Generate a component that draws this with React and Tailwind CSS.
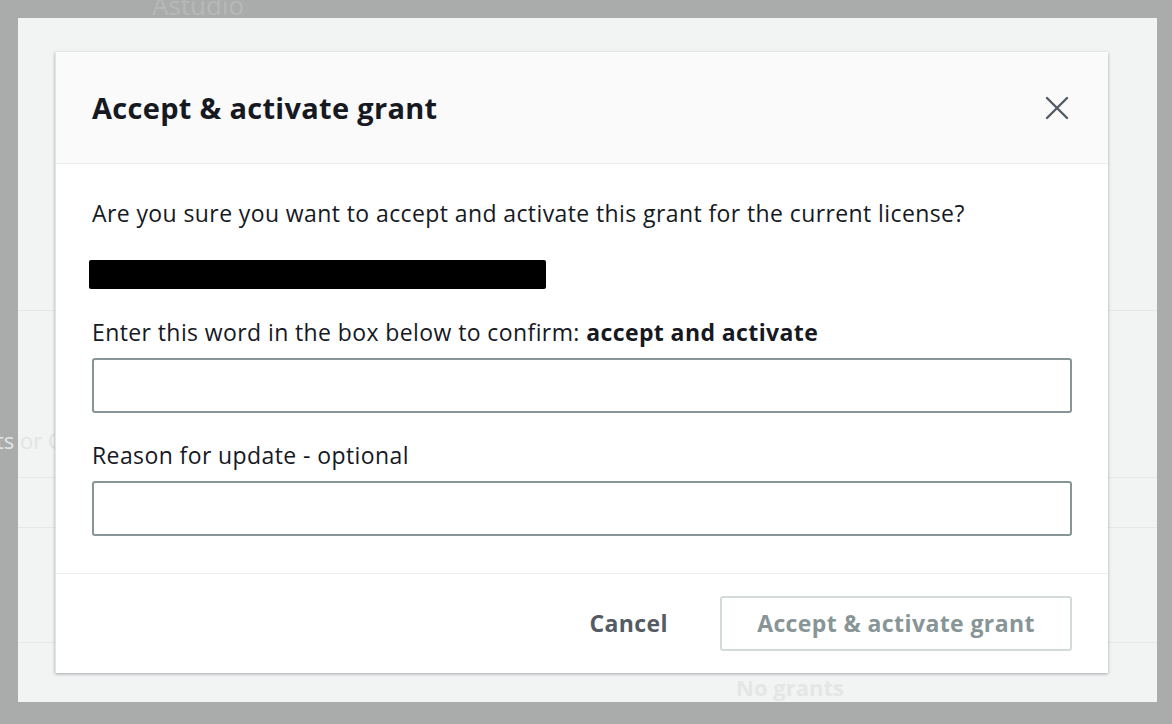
const font = { fontFamily: '"Open Sans", "Noto Sans", sans-serif' };

const CloseIcon = () => (
    <svg width="24" height="24" viewBox="0 0 24 24" fill="none" stroke="#545b64" strokeWidth="2.4" strokeLinecap="round">
        <path d="M2 2 L22 22 M22 2 L2 22" />
    </svg>
);

const TextField = () => (
    <input
        type="text"
        className="block w-full h-[55px] rounded-[3px] border-2 border-[#879596] bg-white px-3 text-[22px] outline-none"
    />
);

export default function App() {
    return (
        <div className="relative w-[1172px] h-[724px] bg-[#aaabab] pt-[18px] pl-[18px] pr-[15px] pb-[22px] overflow-hidden" style={font}>
            <div className="flex h-0 pl-[134px]">
                <span className="-mt-[32px] h-[36px] text-[26px] text-[#b7b8b8]">Astudio</span>
            </div>

            <div className="relative h-full flex flex-col bg-[#f2f3f3]">
                {/* page content dimmed behind the modal */}
                <div className="h-[293px] border-b border-[#e6e8e8]" />
                <div className="h-[167px] flex items-end pb-[20px] border-b border-[#e6e8e8]">
                    <span className="-ml-[22px] text-[22px] text-[#e2e4e4]">ts or C</span>
                </div>
                <div className="h-[50px] border-b border-[#e6e8e8]" />
                <div className="h-[115px] border-b border-[#e6e8e8]" />
                <div className="flex-1 flex items-end pl-[718px]">
                    <span className="text-[22px] leading-[30px] font-bold text-[#e4e6e6]">No grants</span>
                </div>

                {/* Modal */}
                <div className="absolute top-[34px] left-[37px] right-[49px] bottom-[29px] flex flex-col bg-white shadow-[0_1px_3px_rgba(0,28,36,0.35)] border-l border-[#e3e5e5]">
                    {/* Header */}
                    <div className="h-[112px] flex items-center justify-between pl-[36px] pr-[39px] bg-[#fafafa] border-b border-[#eaeded]">
                        <h2 className="text-[29px] font-bold text-[#16191f] tracking-[0.3px]">Accept &amp; activate grant</h2>
                        <CloseIcon />
                    </div>

                    {/* Body */}
                    <div className="flex-1 px-[36px] pt-[33px] text-[23px] leading-[32px] tracking-[0.4px] text-[#16191f]">
                        <p>Are you sure you want to accept and activate this grant for the current license?</p>
                        <div className="mt-[31px] ml-[-3px] w-[457px] h-[29px] bg-black rounded-[2px]" />
                        <p className="mt-[27px]">
                            Enter this word in the box below to confirm: <span className="font-bold">accept and activate</span>
                        </p>
                        <div className="mt-[10px]">
                            <TextField />
                        </div>
                        <p className="mt-[26px]">Reason for update - optional</p>
                        <div className="mt-[10px]">
                            <TextField />
                        </div>
                    </div>

                    {/* Footer */}
                    <div className="h-[100px] flex items-center justify-end gap-[52px] px-[36px] border-t border-[#eaeded] text-[23px] font-bold tracking-[0.4px]">
                        <button className="text-[#545b64]">Cancel</button>
                        <button className="w-[352px] h-[55px] rounded-[3px] border-2 border-[#d5dbdb] text-[#879596]">
                            Accept &amp; activate grant
                        </button>
                    </div>
                </div>
            </div>
        </div>
    );
}
